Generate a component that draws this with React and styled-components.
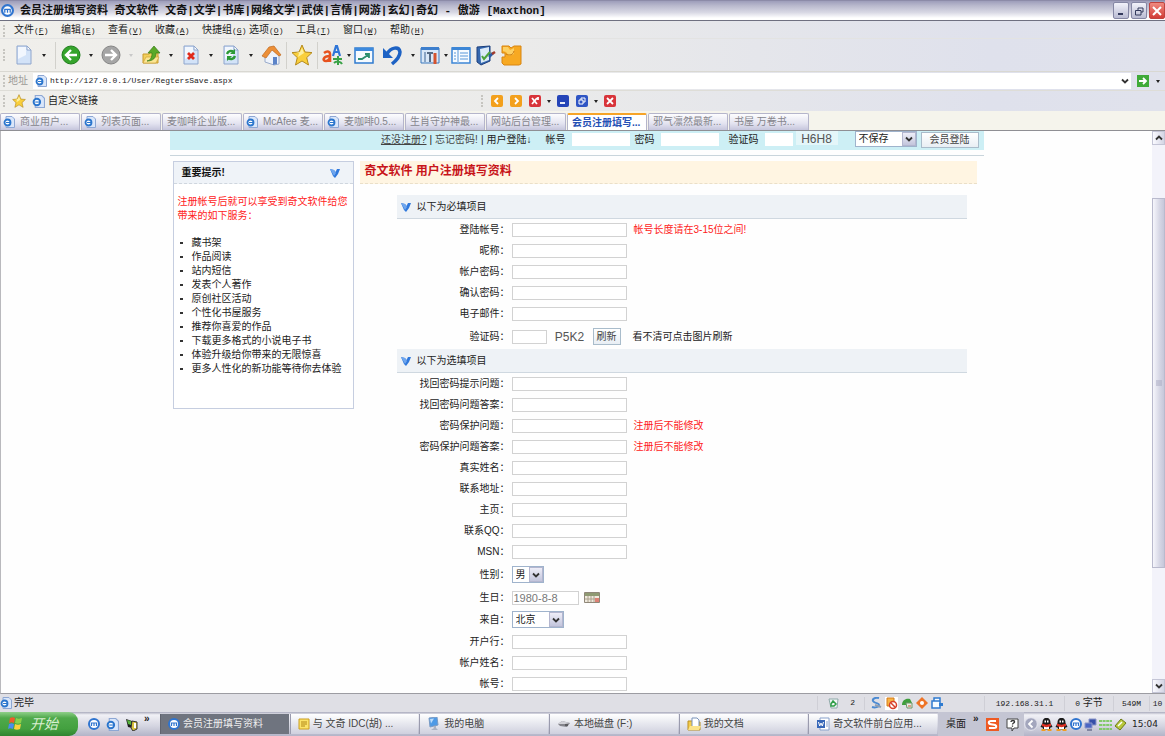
import React from 'react';
import styled, { createGlobalStyle, css } from 'styled-components';

const GlobalStyle = createGlobalStyle`
  * {
    box-sizing: border-box;
  }
  body {
    margin: 0;
    background: #fff;
    color: #222;
    font-family: "Liberation Sans", "Noto Sans CJK SC", sans-serif;
    font-size: 10px;
    line-height: 14px;
  }
  button, input, select {
    font: inherit;
    color: inherit;
    margin: 0;
    padding: 0;
    border: 0;
    border-radius: 0;
  }
  svg {
    display: block;
    flex: none;
  }
`;

const chrome = css`
  background: linear-gradient(90deg, #f0efeb 0%, #ebebea 45%, #dfe1ec 85%, #e0e2ec 100%);
`;

const Shell = styled.div`
  display: flex;
  flex-direction: column;
  height: 100vh;
  overflow: hidden;
`;

/* ---------- window chrome ---------- */

const TitleBar = styled.header`
  display: flex;
  align-items: center;
  height: 21px;
  padding: 0 0 0 1px;
  border-top: 1px solid #8c8ba8;
  border-bottom: 1px solid #6f7080;
  background: linear-gradient(#9d9dba, #b9b9cd 25%, #d8d8e4 60%, #fff 90%);
`;

const TitleText = styled.h1`
  flex: 1;
  margin: 0 0 0 6px;
  font: bold 11px/18px "Liberation Mono", "Noto Sans CJK SC", monospace;
  color: #111;
  white-space: pre;
`;

const WinButton = styled.button`
  display: flex;
  align-items: center;
  justify-content: center;
  width: 16px;
  height: 17px;
  margin-left: 2px;
  border: 1px solid ${p => (p.$close ? '#c0433f' : '#8587a4')};
  border-radius: 2px;
  background: ${p => (p.$close ? 'linear-gradient(#f08a80, #d23c36)' : 'linear-gradient(#f2f2fa, #b9bbd2)')};
`;

const MenuBar = styled.nav`
  display: flex;
  align-items: center;
  height: 18px;
  padding: 2px 0 0 3px;
  border-bottom: 1px solid #e3e3e2;
  ${chrome}
`;

const Grip = styled.span`
  flex: none;
  width: 3px;
  height: 12px;
  margin-right: ${p => p.$gap || 0}px;
  border-left: 2px dotted #c6c5c0;
`;

const MenuItem = styled.button`
  width: 47px;
  background: none;
  text-align: left;
  white-space: nowrap;
`;

const Latin = styled.span`
  font-family: "Liberation Mono", monospace;
  font-size: 8px;
`;

const ToolBar = styled.div`
  display: flex;
  align-items: center;
  height: 33px;
  padding-left: 3px;
  border-bottom: 1px solid #d9d8d2;
  ${chrome}
`;

const ToolButton = styled.button`
  display: flex;
  align-items: center;
  justify-content: center;
  flex: none;
  width: ${p => p.$w || 24}px;
  height: 24px;
  background: none;
`;

const Caret = styled.i`
  border: 2px solid transparent;
  border-top: 3px solid ${p => (p.$dim ? '#c9c9c9' : '#222')};
  border-bottom: 0;
`;

const Divider = styled.span`
  width: 1px;
  height: 27px;
  margin: 0 3px;
  background: #d2d1cc;
`;

const AddressBar = styled.div`
  display: flex;
  align-items: center;
  height: 18px;
  padding: 1px 5px 1px 3px;
  ${chrome}
`;

const AddressLabel = styled.label`
  width: 25px;
  color: #9a9a96;
`;

const AddressBox = styled.div`
  display: flex;
  flex: 1;
  align-items: center;
  height: 16px;
  padding: 0 2px;
  background: #fff;
`;

const AddressInput = styled.input`
  flex: 1;
  height: 14px;
  padding: 0 0 0 3px;
  background: none;
  color: #222;
  font-family: "Liberation Mono", monospace;
  font-size: 8px;
  outline: 0;
`;

const LinkBar = styled.div`
  display: flex;
  align-items: center;
  height: 21px;
  padding-left: 3px;
  border-top: 1px solid #deddd7;
  ${chrome}
`;

const LinkGroup = styled.div`
  display: flex;
  align-items: center;
  gap: 6px;
  flex: 0 0 478px;
`;

const Bookmark = styled.a`
  display: flex;
  align-items: center;
  gap: 3px;
  color: #222;
  text-decoration: none;
`;

const MiniButton = styled.button`
  display: flex;
  align-items: center;
  justify-content: center;
  width: 12px;
  height: 12px;
  margin-right: ${p => p.$gap || 0}px;
  border-radius: 2px;
  background: ${p => p.$color};
`;

const TabStrip = styled.div`
  display: flex;
  align-items: flex-end;
  height: 20px;
  border-bottom: 1px solid #8f8f94;
  background: #f5f4ec;
`;

const Tab = styled.button`
  display: flex;
  align-items: center;
  gap: 5px;
  flex: 0 0 80px;
  height: 17px;
  margin-right: 1px;
  padding-left: ${p => (p.$icon ? 2 : 4)}px;
  overflow: hidden;
  border: 1px solid #b5b5cb;
  border-top: ${p => (p.$active ? '2px solid #f6a428' : '1px solid #b5b5cb')};
  border-bottom: 0;
  border-radius: 2px 2px 0 0;
  background: ${p => (p.$active ? '#fff' : 'linear-gradient(#fdfdfe, #e3e3f0 60%, #c5c5dc)')};
  color: ${p => (p.$active ? '#2450b4' : '#85858c')};
  font-weight: ${p => (p.$active ? 'bold' : 'normal')};
  white-space: pre;
`;

/* ---------- page area ---------- */

const Viewport = styled.div`
  display: flex;
  flex: 1;
  min-height: 0;
  border-left: 1px solid #b9b9bd;
  border-bottom: 1px solid #9c9ca2;
`;

const Page = styled.main`
  flex: 1;
  overflow: hidden;
  background: #fefefe;
`;

const Column = styled.div`
  max-width: 814px;
  margin: 0 auto;
`;

const LoginBar = styled.form`
  display: flex;
  justify-content: flex-end;
  height: 19px;
  padding-right: 5px;
  background: #cdeff5;
  line-height: 17px;
  white-space: nowrap;
`;

const LoginLinks = styled.div`
  display: flex;
  gap: 3px;
  margin-right: 14px;
`;

const PlainLink = styled.a`
  color: #444;
  text-decoration: ${p => (p.$underline ? 'underline' : 'none')};
`;

const LoginField = styled.label`
  display: flex;
  align-items: center;
  gap: 6px;
  height: 17px;
  margin-right: ${p => p.$gap}px;

  input {
    width: ${p => p.$w}px;
    height: 13px;
    background: #fff;
  }
`;

const LoginCode = styled.span`
  width: 42px;
  height: 14px;
  margin-right: 17px;
  background: #e4f6f9;
  color: #555;
  font-size: 12px;
  text-align: center;
`;

const SelectBox = styled.span`
  position: relative;
  display: inline-flex;
  height: ${p => p.$h}px;
  border: 1px solid #9fb3cc;
  background: #fff;

  select {
    width: ${p => p.$w}px;
    padding-left: 3px;
    appearance: none;
    background: none;
    line-height: 14px;
  }
`;

const SelectArrow = styled.span`
  position: absolute;
  top: 0;
  right: 0;
  bottom: 0;
  display: flex;
  align-items: center;
  justify-content: center;
  width: 14px;
  border: 1px solid #b4b6cf;
  background: linear-gradient(#eeeef8, #c3c5dc);
  pointer-events: none;
`;

const PushButton = styled.button`
  width: ${p => p.$w}px;
  height: ${p => p.$h}px;
  border: 1px solid #a9bccb;
  background: linear-gradient(#fff, #e8eef4);
  color: #444;
  line-height: 13px;
`;

const Rule = styled.hr`
  height: 1px;
  margin: 5px 0 5px;
  border: 0;
  background: #c9d5dc;
`;

const Columns = styled.div`
  display: flex;
  align-items: flex-start;
  gap: 6px;
  padding: 0 7px 0 3px;
`;

const SideBox = styled.aside`
  flex: 0 0 181px;
  min-height: 248px;
  border: 1px solid #c6cee0;
  background: #fff;
`;

const SideTitle = styled.h2`
  display: flex;
  align-items: center;
  justify-content: space-between;
  height: 22px;
  margin: 0;
  padding: 0 13px 0 8px;
  border-bottom: 1px dashed #cfd6de;
  background: #eff3f8;
  color: #111;
  font-size: 10px;
`;

const SideNote = styled.p`
  margin: 11px 0 13px 4px;
  color: #f22;
  white-space: nowrap;
`;

const SideList = styled.ul`
  margin: 0;
  padding: 0;
  list-style: none;

  li {
    display: flex;
    align-items: center;
    gap: 9px;
    padding-left: 6px;
    white-space: nowrap;
  }

  li::before {
    content: '';
    width: 3px;
    height: 2px;
    background: #333;
  }
`;

const Main = styled.section`
  flex: 1;
`;

const PageTitle = styled.h2`
  height: 23px;
  margin: 0 0 11px;
  padding-left: 5px;
  border-bottom: 1px dashed #eadfc8;
  background: #fff5e2;
  color: #c8141a;
  font-size: 12px;
  line-height: 20px;
`;

const FormBlock = styled.form`
  margin: 0 10px 0 37px;
`;

const GroupTitle = styled.h3`
  display: flex;
  align-items: center;
  gap: 6px;
  height: 24px;
  margin: 0;
  padding-left: 4px;
  border-bottom: 1px solid #cfd8e0;
  background: #eef2f6;
  font-size: 10px;
  font-weight: normal;
`;

const FieldRow = styled.div`
  display: flex;
  align-items: center;
  height: ${p => p.$h || 21}px;
`;

const FieldLabel = styled.label`
  flex: 0 0 113px;
  margin-right: 2px;
  text-align: right;
  white-space: nowrap;
`;

const TextField = styled.input`
  width: ${p => p.$w || 115}px;
  height: 14px;
  padding-left: 1px;
  border: 1px solid #d2d2d2;
  background: #fff;
  color: #777;
  font-size: 11px;
`;

const Note = styled.span`
  margin-left: ${p => p.$gap || 7}px;
  color: ${p => (p.$plain ? '#222' : '#f22')};
`;

const Captcha = styled.span`
  width: 46px;
  color: #555;
  font-size: 12px;
  text-align: center;
`;

const DateButton = styled.button`
  margin-left: 5px;
  background: none;
`;

const ScrollTrack = styled.div`
  display: flex;
  flex-direction: column;
  flex: 0 0 13px;
  background: #f3f3fa;
`;

const ScrollButton = styled.button`
  display: flex;
  align-items: center;
  justify-content: center;
  flex: 0 0 14px;
  border: 1px solid #c4c5d6;
  background: linear-gradient(90deg, #fafaff, #d4d5e4);
`;

const ScrollGap = styled.div`
  flex: ${p => p.$part};
`;

const ScrollThumb = styled.div`
  display: flex;
  align-items: center;
  justify-content: center;
  flex: 370;
  border: 1px solid #b9bacd;
  background: linear-gradient(90deg, #f6f6fc, #d6d7e5 60%, #c6c7da);
`;

/* ---------- bottom bars ---------- */

const StatusBar = styled.footer`
  display: flex;
  align-items: center;
  height: 18px;
  background: #dfdfe5;
`;

const StatusText = styled.span`
  flex: 1;
  margin-left: 2px;
`;

const StatusIcons = styled.div`
  display: flex;
  align-items: center;
  gap: ${p => p.$gap}px;
  padding: 0 ${p => p.$pad}px;
  border-left: 1px solid #cfcfd6;
`;

const StatusCell = styled.span`
  width: ${p => p.$w}px;
  border-left: 1px solid #cfcfd6;
  text-align: center;
  white-space: nowrap;
`;

const TaskBar = styled.footer`
  display: flex;
  align-items: stretch;
  height: 24px;
  background: linear-gradient(#a9aabc, #f1f1f6 12%, #d3d4e0 60%, #b3b4c8);
`;

const StartButton = styled.button`
  display: flex;
  align-items: center;
  gap: 7px;
  flex: 0 0 78px;
  padding-left: 7px;
  border-radius: 0 9px 9px 0;
  background: linear-gradient(#8fcf89, #4fa94b 25%, #43a03f 70%, #2f8430);
  color: #d9efd2;
  font-size: 14px;
  font-style: italic;
`;

const QuickLaunch = styled.div`
  display: flex;
  align-items: center;
  gap: 6px;
  flex: 0 0 82px;
  padding-left: 10px;
`;

const Chevrons = styled.span`
  align-self: flex-start;
  font-weight: bold;
`;

const Task = styled.button`
  display: flex;
  align-items: center;
  gap: 3px;
  flex: 1;
  min-width: 0;
  margin: 2px 1px 2px 0;
  padding-left: 7px;
  overflow: hidden;
  border-left: 1px solid ${p => (p.$active ? '#60646f' : '#9a9bae')};
  background: ${p => (p.$active ? '#6f747f' : 'linear-gradient(#fff, #e6e7ee 50%, #cfd0de)')};
  color: ${p => (p.$active ? '#eee' : '#444')};
  white-space: pre;
`;

const Desk = styled.div`
  display: flex;
  align-items: center;
  gap: 7px;
  flex: 0 0 86px;
  padding-left: 8px;
  background: #c4c5d3;
`;

const Tray = styled.div`
  display: flex;
  align-items: center;
  gap: 2px;
  flex: 0 0 141px;
`;

const Clock = styled.time`
  margin-left: 3px;
  font: 9px/14px "DejaVu Sans", sans-serif;
`;

/* ---------- icons ---------- */

const Svg = ({ s = 22, w, box = 22, children }) => (
  <svg width={w || s} height={s} viewBox={`0 0 ${w ? (w * box) / s : box} ${box}`} fill="none" aria-hidden="true">
    {children}
  </svg>
);

const Sheet = ({ children }) => (
  <Svg>
    <path d="M4 2h10l4 4v14H4z" fill="#d3e3f8" stroke="#8fa6cd" />
    <path d="M5 3h8v8L5 15z" fill="#f2f7fe" />
    <path d="M14 2v4h4z" fill="#fff" stroke="#8fa6cd" />
    {children}
  </Svg>
);

const Round = ({ color, edge, flip }) => (
  <Svg>
    <circle cx="11" cy="11" r="9" fill={color} stroke={edge} />
    <path d={flip ? 'M5 11h11M11 6l5 5-5 5' : 'M17 11H6M11 6l-5 5 5 5'} stroke="#fff" strokeWidth="2.4" />
  </Svg>
);

const UpIcon = () => (
  <Svg>
    <path d="M3 10h6l2-2h7v11H3z" fill="#f2cf5b" stroke="#c99b2e" />
    <path d="M3 19l3-6h13l-3 6z" fill="#fbe694" stroke="#c99b2e" strokeWidth=".6" />
    <path d="M7 17c4-1 5-4 5-8H8l6-7 6 7h-4c0 5-3 8-9 8z" fill="#5aa928" stroke="#387a18" strokeWidth=".7" />
  </Svg>
);

const StopIcon = () => (
  <Sheet><path d="M8 9l6 6M14 9l-6 6" stroke="#e02a1c" strokeWidth="2.8" /></Sheet>
);

const RefreshIcon = () => (
  <Sheet>
    <path d="M7 10c1-3 4-4 7-2M15 12c-1 3-4 4-7 2" stroke="#2b9a35" strokeWidth="2.4" />
    <path d="M15 5v5h-5zM7 17v-5h5z" fill="#2b9a35" />
  </Sheet>
);

const HomeIcon = () => (
  <Svg>
    <path d="M5 11l7-6 7 6v9l-5 1-9-3z" fill="#eef3fb" stroke="#9aaccc" />
    <path d="M2 12L9 3l5-1 7 9-2 1-7-6-6 8z" fill="#ec8f37" stroke="#be6820" strokeWidth=".7" />
    <path d="M13 13h4v7l-4 1z" fill="#5b83c8" />
  </Svg>
);

const StarIcon = ({ s }) => (
  <Svg s={s}>
    <path d="M11 1l3 7 7 .6-5.300 5L17.500 21 11 17l-6.500 4 1.800-7.400L1 8.600 8 8z" fill="#f9cf3c" stroke="#b58a1c" />
    <path d="M11 4l2 5-6 4 1-4-3-.3 4-.7z" fill="#fdf0a0" />
  </Svg>
);

const FontIcon = () => (
  <Svg>
    <path d="M2 9c4-3 6-1 6 1v8M8 12c-7 0-8 5-4 5 2 0 4-2 4-4" stroke="#e7521e" strokeWidth="2.600" />
    <path d="M11 12l3-10h1l3 10M12 8h5" stroke="#2f76d8" strokeWidth="2.200" />
    <path d="M16 12v9M11 15h9M12 19c3-3 7-1 8 1" stroke="#39a246" strokeWidth="2" />
  </Svg>
);

const ChartIcon = () => (
  <Svg>
    <path d="M2 4h18v15H2z" fill="#f4faff" stroke="#2f7bd0" strokeWidth="1.500" />
    <path d="M2 4h18v3H2z" fill="#3d8ade" />
    <path d="M5 15h4l6-4M12 10h4v4" stroke="#2b8f6f" strokeWidth="1.800" />
  </Svg>
);

const UndoIcon = () => (
  <Svg>
    <path d="M6 10c4-7 12-8 13-2 0 4-3 8-8 12" stroke="#1d62c4" strokeWidth="3.500" />
    <path d="M2 4v10h10z" fill="#1d62c4" />
  </Svg>
);

const ToolsIcon = () => (
  <Svg>
    <path d="M2 4h18v15H2z" fill="#d9e8f8" stroke="#3b78bd" />
    <path d="M2 3h18v3H2z" fill="#3d7fcd" />
    <path d="M6 8v10" stroke="#8aa5c4" strokeWidth="2" />
    <path d="M8 9h6M11 8v10" stroke="#566c86" strokeWidth="2" />
    <path d="M16 9v11" stroke="#d5532d" strokeWidth="3" />
  </Svg>
);

const TableIcon = () => (
  <Svg>
    <path d="M2 4h18v15H2z" fill="#f7fbff" stroke="#3c86d6" strokeWidth="1.500" />
    <path d="M2 3h18v3H2z" fill="#3c86d6" />
    <path d="M8 6v13M4 9h2M4 12h2M4 15h2M10 9h8M10 12h8M10 15h8" stroke="#8db9e6" strokeWidth="1.500" />
  </Svg>
);

const BookIcon = () => (
  <Svg>
    <path d="M2 3l13-1v15l-9 4-4-3z" fill="#3467ae" stroke="#1d3f7c" />
    <path d="M5 5l9-2v13l-8 3z" fill="#dbeaf8" />
    <path d="M7 12l2 3 6-7" stroke="#4da23c" strokeWidth="2" />
    <path d="M14 13l4-4" stroke="#2b5da8" strokeWidth="2.500" />
    <path d="M17 10l3-2" stroke="#a23b2b" strokeWidth="2.500" />
  </Svg>
);

const PuzzleIcon = () => (
  <Svg>
    <path d="M2 2h7l2 2 3-2h7v18l-2 1H4l-2-2v-6h3V9H2z" fill="#f7a922" stroke="#d88510" />
    <path d="M3 3h5l2 3 4-2v6l-5 2-3-4-3-1z" fill="#fdd063" />
    <path d="M6 10c4 2 7 1 8-3" stroke="#c87912" />
  </Svg>
);

const PageIcon = ({ s = 12 }) => (
  <Svg s={s} box={12}>
    <path d="M3 .5h6l2.500 2.500v8.500H3z" fill="#d9e6fa" stroke="#8da7d4" />
    <circle cx="4.500" cy="6.500" r="3" stroke="#2b76cd" strokeWidth="1.800" fill="#fff" />
    <path d="M3 6.500h4" stroke="#2b76cd" />
  </Svg>
);

const MaxIcon = ({ s = 12 }) => (
  <Svg s={s} box={12}>
    <circle cx="6" cy="6" r="5" fill="#fff" stroke="#2f74cf" strokeWidth="2" />
    <path d="M3.500 8V5h5v3M6 5v3" stroke="#2f74cf" strokeWidth="1.200" />
  </Svg>
);

const VIcon = () => (
  <Svg s={10} box={10}>
    <path d="M0 1l4 1 1.500 2L7 1l3 0L8 6 5 10 3 8z" fill="#2f78dc" />
    <path d="M0 1l4 1 2 3-2 3z" fill="#6fa6ee" />
  </Svg>
);

const Chevron = ({ up }) => (
  <Svg s={8} box={8}>
    <path d={up ? 'M1 5.500l3-3 3 3' : 'M1 2.500l3 3 3-3'} stroke="#333" strokeWidth="1.800" />
  </Svg>
);

const CalendarIcon = () => (
  <svg width="16" height="11" viewBox="0 0 16 11" aria-hidden="true">
    <path d="M.5.500h15v10H.5z" fill="#efe9dd" stroke="#8f8778" />
    <path d="M1 1h14v3H1z" fill="#8f9a73" />
    <path d="M4 4v6M7 4v6M10 4v6M1 7h14" stroke="#aaa08c" />
    <path d="M11 6h4v4h-4z" fill="#dd8175" />
  </svg>
);

const FlagIcon = () => (
  <Svg s={16} box={16}>
    <path d="M3 2c2-1 3-1 5 0L7 7C5 6 4 6 2 7z" fill="#ee5a2c" />
    <path d="M9 2c2 1 3 1 6 0l-1 5c-2 1-4 1-6 0z" fill="#8bd04a" />
    <path d="M2 8c2-1 3-1 5 0l-1 5c-2-1-4-1-5 0z" fill="#4b8cf0" />
    <path d="M8 8c2 1 4 1 6 0l-1 5c-2 1-4 1-6 0z" fill="#fbd03d" />
  </Svg>
);

const NoteIcon = () => (
  <Svg s={12} box={12}>
    <path d="M1 1h10v10H1z" fill="#fbe36a" stroke="#cc9e21" />
    <path d="M3 4h6M3 6h6M3 8h4" stroke="#b28614" />
  </Svg>
);

const ComputerIcon = () => (
  <Svg s={14} box={14}>
    <path d="M2 1l8-1 1 8-8 2z" fill="#4e9ae6" stroke="#7a9bc4" />
    <path d="M3 2l4-.5-3 5z" fill="#bcdcfa" />
    <path d="M6 9l1 2-3 2h7l-2-2V9z" fill="#aab2c2" />
  </Svg>
);

const DiskIcon = () => (
  <Svg s={14} box={14}>
    <path d="M1 7l4-3 8 2-3 4-7-1z" fill="#85858c" />
    <path d="M1 7l4-3 8 2-5 1z" fill="#d2d2d8" />
    <path d="M8 8h3" stroke="#333" />
  </Svg>
);

const FolderIcon = () => (
  <Svg s={14} box={14}>
    <path d="M1 4h4l1 1h7v8H1z" fill="#f4cc4c" stroke="#b98f22" />
    <path d="M5 1h5l2 2v7H5z" fill="#fff" stroke="#7b93ba" />
    <path d="M1 13l2-4h11l-2 4z" fill="#fbe38b" />
  </Svg>
);

const WordIcon = () => (
  <Svg s={14} box={14}>
    <path d="M4 1h9v12H4z" fill="#fff" stroke="#8aa2cc" />
    <path d="M1 3h8v8H1z" fill="#3767b8" />
    <path d="M2.500 5l1.200 4L5 6l1.300 3 1.200-4" stroke="#fff" />
    <path d="M10 5h2M10 7h2M10 9h2" stroke="#8aa2cc" />
  </Svg>
);

const RecycleIcon = () => (
  <Svg s={12} box={12}>
    <path d="M2 2h9l-1 9H4z" fill="#f1f6f6" stroke="#8fa9a9" />
    <path d="M4 7l2-3 3 3-2 2H4z" stroke="#2e9e46" strokeWidth="1.500" />
  </Svg>
);

const SwirlIcon = () => (
  <Svg s={12} box={12}>
    <path d="M9 1C4 0 1 3 4 5s5 1 5 3-4 3-7 2" stroke="#4b8ad2" strokeWidth="2" />
    <path d="M5 8l6 2" stroke="#8f9fb4" strokeWidth="2" />
  </Svg>
);

const BlockIcon = () => (
  <Svg s={13} box={13}>
    <path d="M0 0h13v13H0z" fill="#fff" />
    <path d="M2 1h7v8H2z" fill="#f8b445" stroke="#d47a1a" />
    <circle cx="8" cy="8" r="3.500" fill="#fff" stroke="#d8402a" strokeWidth="1.500" />
    <path d="M5.500 5.500l5 5" stroke="#d8402a" strokeWidth="1.500" />
  </Svg>
);

const LeafIcon = () => (
  <Svg s={12} box={12}>
    <path d="M1 8C1 3 5 1 9 2l2 4-4 2z" fill="#3f9e3c" />
    <path d="M5 6h6v5H6z" fill="#e8f0e2" stroke="#6e946a" />
    <path d="M7 9h3" stroke="#cf5337" />
  </Svg>
);

const TargetIcon = () => (
  <Svg s={12} box={12}>
    <path d="M6 0l6 6-6 6-6-6z" fill="#ee7427" />
    <circle cx="6" cy="6" r="2" fill="#fff" />
  </Svg>
);

const WindowIcon = () => (
  <Svg s={12} box={12}>
    <path d="M3 1h6v3H3zM1 4h8v7H1z" fill="#f6fbff" stroke="#2f7bd0" strokeWidth="1.500" />
    <path d="M8 6h4v3H8z" fill="#2f7bd0" />
  </Svg>
);

const ThreadIcon = () => (
  <Svg s={13} box={13}>
    <path d="M1 1l6 2v7l-4-1z" fill="#1d1d1d" />
    <path d="M2 2l4 1v4L3 6z" fill="#56b43d" />
    <path d="M7 3l5 1v7l-4 2-2-3z" fill="#d9c23f" stroke="#333" />
    <path d="M9 5h2v5H9z" fill="#fff" />
  </Svg>
);

const SogouIcon = () => (
  <Svg s={13} box={13}>
    <path d="M0 0h13v13H0z" fill="#ee5a23" />
    <path d="M10 3H5C2 3 2 6 5 6.300l3 .4c3 .4 3 3.300 0 3.300H3" stroke="#fff" strokeWidth="2" />
  </Svg>
);

const HelpIcon = () => (
  <Svg s={13} box={13}>
    <path d="M1 1h11v9H8l-2 3V10H1z" fill="#fff" stroke="#444" />
    <path d="M5 4c0-2 4-2 3.500 0C8.300 5 6.500 5 6.500 6.500M6.500 7.500v1.200" stroke="#333" strokeWidth="1.300" />
  </Svg>
);

const CollapseIcon = () => (
  <Svg s={14} box={14}>
    <circle cx="7" cy="7" r="6.300" fill="#a3a6bd" stroke="#e7e7f0" />
    <path d="M8.500 3.500L5 7l3.500 3.500" stroke="#fff" strokeWidth="1.800" />
  </Svg>
);

const PenguinIcon = () => (
  <Svg s={13} box={13}>
    <path d="M6.500 0c3 0 4 2 4 5l2 4-2 .5-1 2.500h-6L2.500 9.500l-2-.5 2-4c0-3 1-5 4-5z" fill="#1b1b1b" />
    <path d="M4 7h5v4.500H4z" fill="#fff" />
    <path d="M2 5.500c3 1.500 6 1.500 9 0v2.500c-3 1.500-6 1.500-9 0z" fill="#dc2f22" />
    <path d="M4.500 2.500h1.500v2H4.500zM7 2.500h1.500v2H7z" fill="#fff" />
    <path d="M1.500 11h4v2h-4zM7.500 11h4v2h-4z" fill="#f29b1f" />
  </Svg>
);

const NetIcon = () => (
  <Svg s={13} box={13}>
    <path d="M5 1h7v6H5z" fill="#3650a8" stroke="#8c96c8" />
    <path d="M1 5h7v5H1z" fill="#4b66c4" stroke="#8c96c8" />
    <path d="M3 12h5" stroke="#6a7090" strokeWidth="1.500" />
  </Svg>
);

const BarsIcon = () => (
  <Svg s={13} box={13}>
    <path d="M0 3h13M0 7h13M0 11h13" stroke="#83c96a" strokeWidth="2" strokeDasharray="3 .6" />
  </Svg>
);

const PenIcon = () => (
  <Svg s={13} box={13}>
    <path d="M1 8l6-7 5 4-6 7z" fill="#b7c73a" stroke="#6c7a16" />
    <path d="M4 8l4-4" stroke="#fff" strokeWidth="1.500" />
  </Svg>
);

const Glyph = ({ d, w = 1.8 }) => (
  <Svg s={10} box={10}><path d={d} stroke="#fff" strokeWidth={w} /></Svg>
);

/* ---------- data ---------- */

const menus = [
  ['文件', 'F'], ['编辑', 'E'], ['查看', 'V'], ['收藏', 'A'], ['快捷组', 'G'],
  ['选项', 'O'], ['工具', 'T'], ['窗口', 'W'], ['帮助', 'H'],
];

const tabs = [
  { text: '商业用户...', icon: true },
  { text: '列表页面...', icon: true },
  { text: '麦咖啡企业版...' },
  { text: 'McAfee 麦...', icon: true },
  { text: '麦咖啡0.5...', icon: true },
  { text: '生肖守护神最...' },
  { text: '网站后台管理...' },
  { text: '会员注册填写...', active: true },
  { text: '邪气凛然最新...' },
  { text: '书屋 万卷书...' },
];

const services = [
  '藏书架', '作品阅读', '站内短信', '发表个人著作', '原创社区活动', '个性化书屋服务',
  '推荐你喜爱的作品', '下载更多格式的小说电子书', '体验升级给你带来的无限惊喜',
  '更多人性化的新功能等待你去体验',
];

const required = [
  { id: 'account', label: '登陆帐号', note: '帐号长度请在3-15位之间!' },
  { id: 'nick', label: '昵称' },
  { id: 'pwd', label: '帐户密码', type: 'password' },
  { id: 'pwd2', label: '确认密码', type: 'password' },
  { id: 'email', label: '电子邮件' },
];

const optional = [
  { id: 'hint', label: '找回密码提示问题' },
  { id: 'hintAnswer', label: '找回密码问题答案' },
  { id: 'guard', label: '密码保护问题', note: '注册后不能修改' },
  { id: 'guardAnswer', label: '密码保护问题答案', note: '注册后不能修改' },
  { id: 'realName', label: '真实姓名' },
  { id: 'address', label: '联系地址' },
  { id: 'homepage', label: '主页' },
  { id: 'qq', label: '联系QQ' },
  { id: 'msn', label: 'MSN' },
];

const bank = [
  { id: 'bank', label: '开户行' },
  { id: 'holder', label: '帐户姓名' },
  { id: 'cardNo', label: '帐号' },
];

const tasks = [
  { text: '会员注册填写资料', icon: <MaxIcon />, active: true },
  { text: '与 文奇 IDC(胡) ...', icon: <NoteIcon /> },
  { text: '我的电脑', icon: <ComputerIcon /> },
  { text: '本地磁盘 (F:)', icon: <DiskIcon /> },
  { text: '我的文档', icon: <FolderIcon /> },
  { text: '奇文软件前台应用...', icon: <WordIcon /> },
];

/* ---------- pieces ---------- */

function Drop({ label, w = 16, dim }) {
  return <ToolButton $w={w} aria-label={label}><Caret $dim={dim} /></ToolButton>;
}

function Field({ id, label, type = 'text', note }) {
  return (
    <FieldRow>
      <FieldLabel htmlFor={id}>{label}：</FieldLabel>
      <TextField id={id} type={type} />
      {note && <Note>{note}</Note>}
    </FieldRow>
  );
}

function Select({ id, w, h, children, ...rest }) {
  return (
    <SelectBox $w={w} $h={h}>
      <select id={id} {...rest}>{children}</select>
      <SelectArrow><Chevron /></SelectArrow>
    </SelectBox>
  );
}

function BrowserTop() {
  return (
    <>
      <TitleBar>
        <MaxIcon s={13} />
        <TitleText>会员注册填写资料 奇文软件 文奇|文学|书库|网络文学|武侠|言情|网游|玄幻|奇幻 - 傲游 [Maxthon]</TitleText>
        <WinButton aria-label="最小化"><Svg s={10} box={10}><path d="M2 8h5" stroke="#333a5c" strokeWidth="2" /></Svg></WinButton>
        <WinButton aria-label="还原"><Svg s={10} box={10}><path d="M4 4V2h5v4H7M1.500 4.500H7V9H1.500z" stroke="#333a5c" /></Svg></WinButton>
        <WinButton $close aria-label="关闭"><Glyph d="M1 1l8 8M9 1L1 9" w={2} /></WinButton>
      </TitleBar>
      <MenuBar>
        <Grip $gap={8} />
        {menus.map(([name, key]) => (
          <MenuItem key={key}>{name}<Latin>(<u>{key}</u>)</Latin></MenuItem>
        ))}
      </MenuBar>
      <ToolBar>
        <Grip $gap={6} />
        <ToolButton aria-label="新建"><Sheet /></ToolButton>
        <Drop label="新建选项" />
        <Divider />
        <ToolButton aria-label="后退"><Round color="#35a42c" edge="#1f7d1c" /></ToolButton>
        <Drop label="后退历史" />
        <ToolButton aria-label="前进"><Round color="#a5a5a5" edge="#858585" flip /></ToolButton>
        <Drop label="前进历史" dim />
        <ToolButton aria-label="向上"><UpIcon /></ToolButton>
        <Drop label="向上选项" />
        <ToolButton aria-label="停止"><StopIcon /></ToolButton>
        <Drop label="停止选项" />
        <ToolButton aria-label="刷新"><RefreshIcon /></ToolButton>
        <Drop label="刷新选项" />
        <ToolButton aria-label="主页"><HomeIcon /></ToolButton>
        <Divider />
        <ToolButton aria-label="收藏"><StarIcon /></ToolButton>
        <Divider />
        <ToolButton aria-label="字体"><FontIcon /></ToolButton>
        <Drop label="字体选项" w={7} />
        <ToolButton aria-label="图表"><ChartIcon /></ToolButton>
        <ToolButton $w={32} aria-label="撤销"><UndoIcon /></ToolButton>
        <Drop label="撤销选项" w={10} />
        <ToolButton aria-label="工具"><ToolsIcon /></ToolButton>
        <Drop label="工具选项" w={7} />
        <ToolButton aria-label="侧边栏"><TableIcon /></ToolButton>
        <ToolButton $w={26} aria-label="笔记"><BookIcon /></ToolButton>
        <ToolButton aria-label="插件"><PuzzleIcon /></ToolButton>
      </ToolBar>
      <AddressBar>
        <Grip $gap={2} />
        <AddressLabel htmlFor="url">地址</AddressLabel>
        <AddressBox>
          <PageIcon />
          <AddressInput id="url" defaultValue="http://127.0.0.1/User/RegtersSave.aspx" />
          <Chevron />
        </AddressBox>
        <ToolButton $w={24} aria-label="转到">
          <Svg s={12} box={12}>
            <path d="M0 0h12v12H0z" fill="#3faa38" />
            <path d="M2 6h7M6 3l3 3-3 3" stroke="#fff" strokeWidth="1.800" />
          </Svg>
        </ToolButton>
        <Drop label="转到选项" w={5} />
      </AddressBar>
      <LinkBar>
        <LinkGroup>
          <Grip />
          <StarIcon s={14} />
          <Bookmark href="#"><PageIcon s={13} />自定义链接</Bookmark>
        </LinkGroup>
        <Grip $gap={7} />
        <MiniButton $color="#f3a01c" $gap={7} aria-label="上一页"><Glyph d="M6 2L3 5l3 3" /></MiniButton>
        <MiniButton $color="#f3a01c" $gap={7} aria-label="下一页"><Glyph d="M4 2l3 3-3 3" /></MiniButton>
        <MiniButton $color="#d8343a" aria-label="关闭全部"><Glyph d="M2 2l5 6M7 2L2 8M8 1v3" /></MiniButton>
        <Drop label="关闭选项" />
        <MiniButton $color="#2444b8" $gap={7} aria-label="最小化页面"><Glyph d="M2 7h5" /></MiniButton>
        <MiniButton $color="#2f55c4" aria-label="还原页面"><Glyph d="M4 4V2h4v4H6M2 4h4v4H2z" w={1} /></MiniButton>
        <Drop label="还原选项" />
        <MiniButton $color="#d8343a" aria-label="关闭页面"><Glyph d="M2 2l6 6M8 2L2 8" /></MiniButton>
      </LinkBar>
      <TabStrip>
        {tabs.map(t => (
          <Tab key={t.text} $icon={t.icon} $active={t.active}>
            {t.icon && <PageIcon />}
            {t.text}
          </Tab>
        ))}
      </TabStrip>
    </>
  );
}

function Login() {
  return (
    <LoginBar>
      <LoginLinks>
        <PlainLink href="#" $underline>还没注册?</PlainLink>|
        <PlainLink href="#">忘记密码!</PlainLink>|
        <span>用户登陆↓</span>
      </LoginLinks>
      <LoginField $w={58} $gap={5}>帐号<input type="text" /></LoginField>
      <LoginField $w={58} $gap={10}>密码<input type="password" /></LoginField>
      <LoginField $w={28} $gap={3}>验证码<input type="text" /></LoginField>
      <LoginCode>H6H8</LoginCode>
      <Select id="keep" w={60} h={16} aria-label="保存登陆"><option>不保存</option></Select>
      <Note $gap={4}><PushButton type="button" $w={58} $h={16}>会员登陆</PushButton></Note>
    </LoginBar>
  );
}

function Register() {
  return (
    <Main>
      <PageTitle>奇文软件 用户注册填写资料</PageTitle>
      <FormBlock>
        <GroupTitle><VIcon />以下为必填项目</GroupTitle>
        {required.map(f => <Field key={f.id} {...f} />)}
        <FieldRow $h={25}>
          <FieldLabel htmlFor="code">验证码：</FieldLabel>
          <TextField id="code" $w={35} />
          <Captcha>P5K2</Captcha>
          <PushButton type="button" $w={28} $h={17}>刷新</PushButton>
          <Note $plain $gap={12}>看不清可点击图片刷新</Note>
        </FieldRow>
        <GroupTitle><VIcon />以下为选填项目</GroupTitle>
        {optional.map(f => <Field key={f.id} {...f} />)}
        <FieldRow $h={25}>
          <FieldLabel htmlFor="sex">性别：</FieldLabel>
          <Select id="sex" w={30} h={17}><option>男</option></Select>
        </FieldRow>
        <FieldRow>
          <FieldLabel htmlFor="birthday">生日：</FieldLabel>
          <TextField id="birthday" $w={67} defaultValue="1980-8-8" />
          <DateButton type="button" aria-label="选择日期"><CalendarIcon /></DateButton>
        </FieldRow>
        <FieldRow $h={23}>
          <FieldLabel htmlFor="from">来自：</FieldLabel>
          <Select id="from" w={50} h={17}><option>北京</option></Select>
        </FieldRow>
        {bank.map(f => <Field key={f.id} {...f} />)}
      </FormBlock>
    </Main>
  );
}

function BrowserBottom() {
  return (
    <>
      <StatusBar>
        <PageIcon />
        <StatusText>完毕</StatusText>
        <StatusIcons $gap={11} $pad={9}><RecycleIcon /><Latin>2</Latin></StatusIcons>
        <StatusIcons $gap={3} $pad={5}>
          <SwirlIcon /><BlockIcon /><LeafIcon /><TargetIcon /><WindowIcon />
        </StatusIcons>
        <StatusCell $w={36} />
        <StatusCell $w={80}><Latin>192.168.31.1</Latin></StatusCell>
        <StatusCell $w={49}><Latin>0</Latin> 字节</StatusCell>
        <StatusCell $w={36}><Latin>549M</Latin></StatusCell>
        <StatusCell $w={16}><Latin>10</Latin></StatusCell>
      </StatusBar>
      <TaskBar>
        <StartButton><FlagIcon />开始</StartButton>
        <QuickLaunch>
          <MaxIcon />
          <PageIcon s={13} />
          <ThreadIcon />
          <Chevrons>»</Chevrons>
        </QuickLaunch>
        {tasks.map(t => <Task key={t.text} $active={t.active}>{t.icon}{t.text}</Task>)}
        <Desk>桌面<Chevrons>»</Chevrons><SogouIcon /><HelpIcon /></Desk>
        <Tray>
          <CollapseIcon /><PenguinIcon /><PenguinIcon /><MaxIcon /><NetIcon /><BarsIcon /><PenIcon />
          <Clock>15:04</Clock>
        </Tray>
      </TaskBar>
    </>
  );
}

export default function App() {
  return (
    <Shell>
      <GlobalStyle />
      <BrowserTop />
      <Viewport>
        <Page>
          <Column>
            <Login />
            <Rule />
            <Columns>
              <SideBox>
                <SideTitle>重要提示!<VIcon /></SideTitle>
                <SideNote>注册帐号后就可以享受到奇文软件给您<br />带来的如下服务：</SideNote>
                <SideList>
                  {services.map(s => <li key={s}>{s}</li>)}
                </SideList>
              </SideBox>
              <Register />
            </Columns>
          </Column>
        </Page>
        <ScrollTrack>
          <ScrollButton aria-label="向上滚动"><Chevron up /></ScrollButton>
          <ScrollGap $part={53} />
          <ScrollThumb><Svg s={6} box={6}><path d="M0 1h6M0 3h6M0 5h6" stroke="#a9aac2" /></Svg></ScrollThumb>
          <ScrollGap $part={111} />
          <ScrollButton aria-label="向下滚动"><Chevron /></ScrollButton>
        </ScrollTrack>
      </Viewport>
      <BrowserBottom />
    </Shell>
  );
}
